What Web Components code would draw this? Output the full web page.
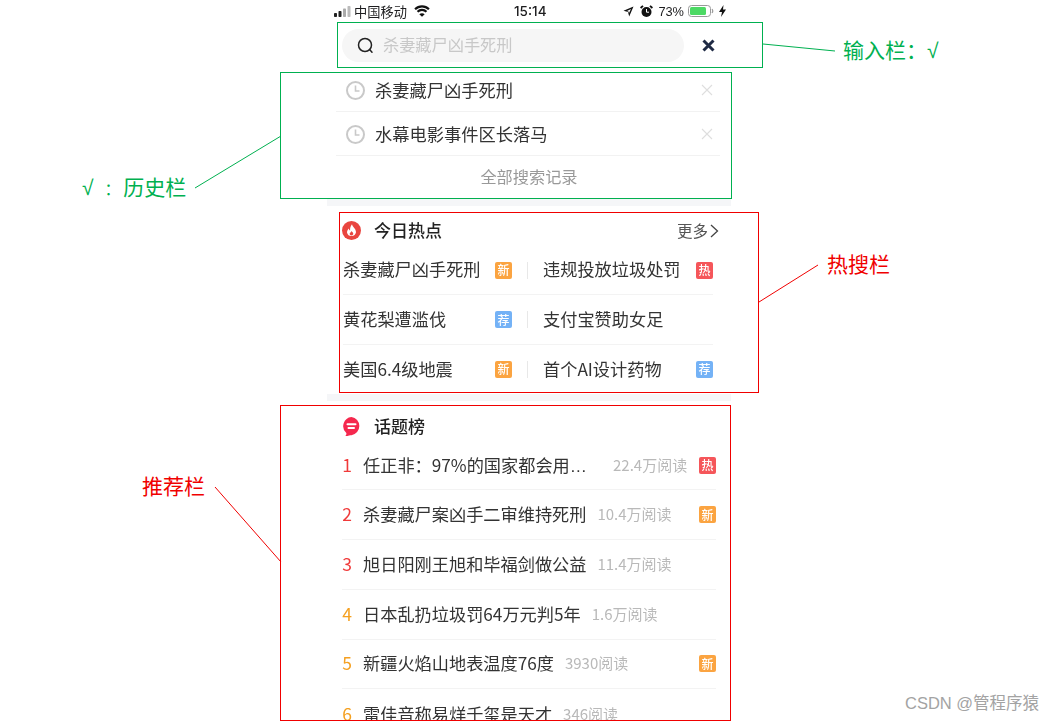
<!DOCTYPE html>
<html lang="zh">
<head>
<meta charset="utf-8">
<title>搜索</title>
<style>
  html, body { margin: 0; padding: 0; background: #fff; }
  body { width: 1056px; height: 721px; overflow: hidden; position: relative;
    font-family: "Noto Sans CJK SC", "Liberation Sans", sans-serif; color: #333; }
</style>
</head>
<body>
<phone-page>
  <status-bar></status-bar>
  <search-bar placeholder="杀妻藏尸凶手死刑"></search-bar>
  <history-row>杀妻藏尸凶手死刑</history-row>
  <history-row>水幕电影事件区长落马</history-row>
  <history-all>全部搜索记录</history-all>
  <gray-band></gray-band>
  <section-head icon="fire" more>今日热点</section-head>
  <hot-row><hot-cell tag="新">杀妻藏尸凶手死刑</hot-cell><hot-cell tag="热">违规投放垃圾处罚</hot-cell></hot-row>
  <hot-row><hot-cell tag="荐">黄花梨遭滥伐</hot-cell><hot-cell>支付宝赞助女足</hot-cell></hot-row>
  <hot-row last><hot-cell tag="新">美国6.4级地震</hot-cell><hot-cell tag="荐">首个AI设计药物</hot-cell></hot-row>
  <gray-band></gray-band>
  <section-head icon="talk">话题榜</section-head>
  <topic-row num="1" reads="22.4万阅读" tag="热" style="--gap:26px">任正非：97%的国家都会用<span style="font-family:'Liberation Sans',sans-serif">…</span></topic-row>
  <topic-row num="2" reads="10.4万阅读" tag="新">杀妻藏尸案凶手二审维持死刑</topic-row>
  <topic-row num="3" reads="11.4万阅读">旭日阳刚王旭和毕福剑做公益</topic-row>
  <topic-row num="4" reads="1.6万阅读">日本乱扔垃圾罚64万元判5年</topic-row>
  <topic-row num="5" reads="3930阅读" tag="新">新疆火焰山地表温度76度</topic-row>
  <topic-row num="6" reads="346阅读">雷佳音称易烊千玺是天才</topic-row>
</phone-page>

<!-- the hand drawn notes over the screenshot -->
<note-box color="#00b050" style="left:337px;top:22px;width:424px;height:44px"></note-box>
<note-box color="#00b050" style="left:280px;top:72px;width:450px;height:125px"></note-box>
<note-box color="#f00000" style="left:339px;top:212px;width:418px;height:179px"></note-box>
<note-box color="#f00000" style="left:280px;top:405px;width:449px;height:314px"></note-box>
<note-line color="#00b050" d="M763 44 L835 51"></note-line>
<note-line color="#00b050" d="M195 188 L281 136"></note-line>
<note-line color="#f00000" d="M759 302 L818 265"></note-line>
<note-line color="#f00000" d="M215 487 L281 562"></note-line>
<note-label color="#00b050" style="left:843px;top:37px">输入栏：√</note-label>
<note-label color="#00b050" style="left:82px;top:174px;word-spacing:-3px">√ <span style="margin-left:8px;font-size:16px">：</span> 历史栏</note-label>
<note-label color="#f00000" style="left:827px;top:251px">热搜栏</note-label>
<note-label color="#f00000" style="left:142px;top:473px">推荐栏</note-label>
<note-label color="#a3a3a3" small style="left:905px;top:692px">CSDN @管程序猿</note-label>

<script>
// small helper so every element just hands over its markup
function defineEl(name, css, html, init) {
  class El extends HTMLElement {
    constructor() {
      super()
      this.attachShadow({mode: 'open'})
      this.shadowRoot.innerHTML = `<style>${css}</style>${typeof html === 'function' ? html(this) : html}`
      if (init) init(this)
    }
  }
  customElements.define(name, El)
}

const tagColors = { '新': '#fba441', '热': '#f5565a', '荐': '#74b2f6' }

defineEl('phone-page', `
  :host { display: block; width: 404px; margin-left: 327px; filter: blur(.3px); }
`, `<slot></slot>`)

defineEl('status-bar', `
  :host { display: flex; align-items: center; height: 22px; padding: 0 5px 0 7px; font-size: 13.25px; color: #1d1d1f; position: relative; }
  svg { display: block; flex: none; }
  .op { margin-left: 3px; }
  .wifi { margin-left: 7px; }
  .time { position: absolute; left: 187px; font-family: "Inter", "Liberation Sans", sans-serif; font-weight: 500; font-size: 13.5px; }
  .right { margin-left: auto; display: flex; align-items: center; }
  .pct { font-family: "Liberation Sans", sans-serif; font-size: 12.8px; margin: 0 4px 0 5px; }
`, `
  <svg width="17" height="11" viewBox="0 0 17 11">
    <rect x="0" y="7" width="3" height="4" rx=".8" fill="#222"/>
    <rect x="4.5" y="5" width="3" height="6" rx=".8" fill="#222"/>
    <rect x="9" y="2.5" width="3" height="8.5" rx=".8" fill="#aaa"/>
    <rect x="13.5" y="0" width="3" height="11" rx=".8" fill="#bbb"/>
  </svg>
  <span class="op">中国移动</span>
  <svg class="wifi" width="16" height="12" viewBox="0 0 15 11" fill="none" stroke="#111" stroke-width="2">
    <path d="M1 3.9a9.2 9.2 0 0 1 13 0"/>
    <path d="M3.3 6.2a6 6 0 0 1 8.4 0"/>
    <path d="M7.5 11 L5 8.6a3.4 3.4 0 0 1 5 0z" fill="#111" stroke="none"/>
  </svg>
  <span class="time">15:14</span>
  <div class="right">
    <svg width="11" height="11" viewBox="0 0 11 11"><path d="M10.5 .5 L.5 4.8 L5 6 L6.2 10.5z M8 3 L4 5 L5.4 5.4 L6 6.9z" fill="#111" fill-rule="evenodd"/></svg>
    <svg style="margin-left:6px" width="13" height="13" viewBox="0 0 13 13">
      <circle cx="6.5" cy="7" r="5" fill="#111"/>
      <path d="M6.5 4 V7.2 H9" stroke="#fff" stroke-width="1" fill="none"/>
      <path d="M.6 3 L3 .8 M12.4 3 L10 .8" stroke="#111" stroke-width="1.8"/>
    </svg>
    <span class="pct">73%</span>
    <svg width="26" height="12" viewBox="0 0 26 12">
      <rect x=".5" y=".5" width="22" height="11" rx="3" fill="#fff" stroke="#999"/>
      <rect x="2" y="2" width="16" height="8" rx="1.5" fill="#4cd964"/>
      <path d="M24 4 q1.5 2 0 4" stroke="#999" stroke-width="1.2" fill="none"/>
    </svg>
    <svg style="margin-left:5px" width="7" height="12" viewBox="0 0 7 12"><path d="M4.5 0 L0 7 H3 L2 12 L7 4.6 H4z" fill="#111"/></svg>
  </div>
`)

defineEl('search-bar', `
  :host { display: flex; align-items: center; height: 46px; padding-left: 15px; box-sizing: border-box; }
  .pill { display: flex; align-items: center; width: 342px; height: 33px; box-sizing: border-box; padding-left: 15px; border-radius: 17px; background: #f6f6f6; margin-top: 1px; }
  .ph { margin: -3px 0 0 9px; font-size: 16.2px; color: #c8c8c8; }
  svg { display: block; flex: none; }
`, el => `
  <div class="pill">
    <svg width="17" height="17" viewBox="0 0 17 17" fill="none" stroke="#222" stroke-width="1.5">
      <circle cx="8" cy="8" r="6.5"/><path d="M12.6 12.6 L15 15.2" stroke-linecap="round"/>
    </svg>
    <span class="ph">${el.getAttribute('placeholder')}</span>
  </div>
  <svg width="13" height="13" viewBox="0 0 13 13" stroke="#1f2a44" stroke-width="3" style="margin:1px 0 0 18px"><path d="M1.5 1.5 L11.5 11.5 M11.5 1.5 L1.5 11.5"/></svg>
`)

defineEl('history-row', `
  :host { display: flex; align-items: center; height: 44px; margin-left: 9px; width: 384px; box-sizing: border-box; border-bottom: 1px solid #f2f2f2; padding-left: 10px; font-size: 17.25px; color: #333; }
  span { margin-left: 10px; }
  svg { display: block; flex: none; margin-top: 1px; }
  .x { margin-left: auto; margin-right: 7px; }
`, `
  <svg width="19" height="19" viewBox="0 0 19 19" fill="none" stroke="#c9c9c9" stroke-width="2">
    <circle cx="9.5" cy="9.5" r="8.5"/><path d="M9.5 4.5 V10 H13.5" stroke-width="1.6"/>
  </svg>
  <span><slot></slot></span>
  <svg class="x" width="12" height="12" viewBox="0 0 12 12" stroke="#dedede" stroke-width="1.1"><path d="M1 1 L11 11 M11 1 L1 11"/></svg>
`)

defineEl('history-all', `
  :host { display: flex; align-items: center; justify-content: center; height: 43px; font-size: 16.2px; color: #999; width: 404px; box-sizing: border-box; padding-bottom: 3px; }
`, `<slot></slot>`)

defineEl('gray-band', `
  :host { display: block; height: 6.5px; background: #f5f6f8; }
`, ``)

defineEl('section-head', `
  :host { display: flex; align-items: center; height: 40px; padding: 10px 0 0 15px; width: 392px; box-sizing: border-box; font-size: 17px; font-weight: 500; color: #222; }
  :host(:not([more])) { padding-top: 11px; }
  .t { margin: -2px 0 0 13px; }
  svg { display: block; flex: none; }
  .more { margin: -2px 0 0 auto; display: flex; align-items: center; font-size: 15.5px; font-weight: 400; color: #555; }
  .more svg { margin: 2px 0 0 2px; }
`, el => `
  ${el.getAttribute('icon') === 'fire' ? `
  <svg width="19" height="19" viewBox="0 0 19 19">
    <circle cx="9.5" cy="9.5" r="9.5" fill="#e9453f"/>
    <path d="M10 3.2 C10.5 6 14 7.6 14 11.2 A4.6 4.6 0 0 1 5 11.4 C5 9.5 6 8.4 6.8 7.4 C7 8.6 7.5 9.2 8.1 9.4 C7.9 7.2 8.5 5 10 3.2z" fill="#fff"/>
    <path d="M9.6 10 C10 11 11.4 11.6 11.3 13 A1.9 1.9 0 0 1 7.6 13.1 C7.6 11.9 9.2 11.2 9.6 10z" fill="#e9453f"/>
  </svg>` : `
  <svg width="19" height="19" viewBox="0 0 19 19">
    <path d="M9.5 0 A9.2 9.2 0 0 1 9.5 18.2 C8 18.2 6.5 18.9 3.4 19 C4.4 18 4.6 17 4.3 16 A9.2 9.2 0 0 1 9.5 0z" fill="#f5284e"/>
    <path d="M5.5 7.2 H13.5 M6.5 11 H12" stroke="#fff" stroke-width="2" stroke-linecap="round"/>
  </svg>`}
  <span class="t"><slot></slot></span>
  ${el.hasAttribute('more') ? `<span class="more">更多<svg width="9" height="14" viewBox="0 0 9 14" fill="none" stroke="#444" stroke-width="1.3"><path d="M1 1 L7.5 7 L1 13"/></svg></span>` : ''}
`)

defineEl('tag-badge', `
  :host { display: flex; align-items: center; justify-content: center; width: 17px; height: 17px; border-radius: 2px; font-size: 12px; font-weight: 500; line-height: 1; color: #fff; flex: none; }
`, `<slot></slot>`)

defineEl('hot-row', `
  :host { display: grid; grid-template-columns: 200px 170px; height: 49.6px; margin-left: 16px; width: 370px; box-sizing: border-box; border-bottom: 1px solid #f3f3f3; }
  :host([last]) { border-bottom: 0; }
`, `<slot></slot>`)

defineEl('hot-cell', `
  :host { display: flex; align-items: center; font-size: 17.2px; color: #333; position: relative; white-space: nowrap; padding-bottom: 2px; }
  :host(:first-child) .sep { display: block; }
  .sep { display: none; position: absolute; left: 184px; top: 16px; width: 1px; height: 17px; background: #e8e8e8; }
  tag-badge { position: absolute; left: 152px; top: 16px; }
  :host(:last-child) tag-badge { left: 153px; }
`, el => {
  let tag = el.getAttribute('tag')
  return `<slot></slot><i class="sep"></i>${tag ? `<tag-badge style="background:${tagColors[tag]}">${tag}</tag-badge>` : ''}`
})

defineEl('topic-row', `
  :host { display: flex; align-items: center; height: 49.7px; margin-left: 15px; width: 374px; box-sizing: border-box; border-bottom: 1px solid #f3f3f3; font-size: 17.2px; color: #333; }
  :host(:last-child) { border-bottom: 0; }
  .num { width: 10px; margin: -2px 11px 0 0; text-align: center; font-size: 17.5px; flex: none; }
  .reads { margin: -2px 0 0 var(--gap, 11px); font-size: 15px; color: #b9b9b9; white-space: nowrap; }
  tag-badge { margin-left: auto; }
  .txt { white-space: nowrap; margin-top: -2px; }
`, el => {
  let n = +el.getAttribute('num')
  let tag = el.getAttribute('tag')
  return `<span class="num" style="color:${n < 4 ? '#f03a3a' : '#f5a020'}">${n}</span>
    <span class="txt"><slot></slot></span>
    <span class="reads">${el.getAttribute('reads')}</span>
    ${tag ? `<tag-badge style="background:${tagColors[tag]}">${tag}</tag-badge>` : ''}`
})

defineEl('note-box', `
  :host { display: block; position: absolute; border: 1px solid currentColor; pointer-events: none; }
`, ``, el => { el.style.color = el.getAttribute('color') })

defineEl('note-line', `
  :host { display: block; position: absolute; left: 0; top: 0; width: 1056px; height: 721px; pointer-events: none; }
  svg { display: block; }
`, el => `<svg width="1056" height="721"><path d="${el.getAttribute('d')}" stroke="${el.getAttribute('color')}" fill="none"/></svg>`)

defineEl('note-label', `
  :host { display: block; position: absolute; font-size: 21px; line-height: 28px; white-space: nowrap; font-family: "Liberation Sans", "Noto Sans CJK SC", sans-serif; }
  :host([small]) { font-size: 16.5px; line-height: 22px; }
`, `<slot></slot>`, el => { el.style.color = el.getAttribute('color') })
</script>
</body>
</html>
